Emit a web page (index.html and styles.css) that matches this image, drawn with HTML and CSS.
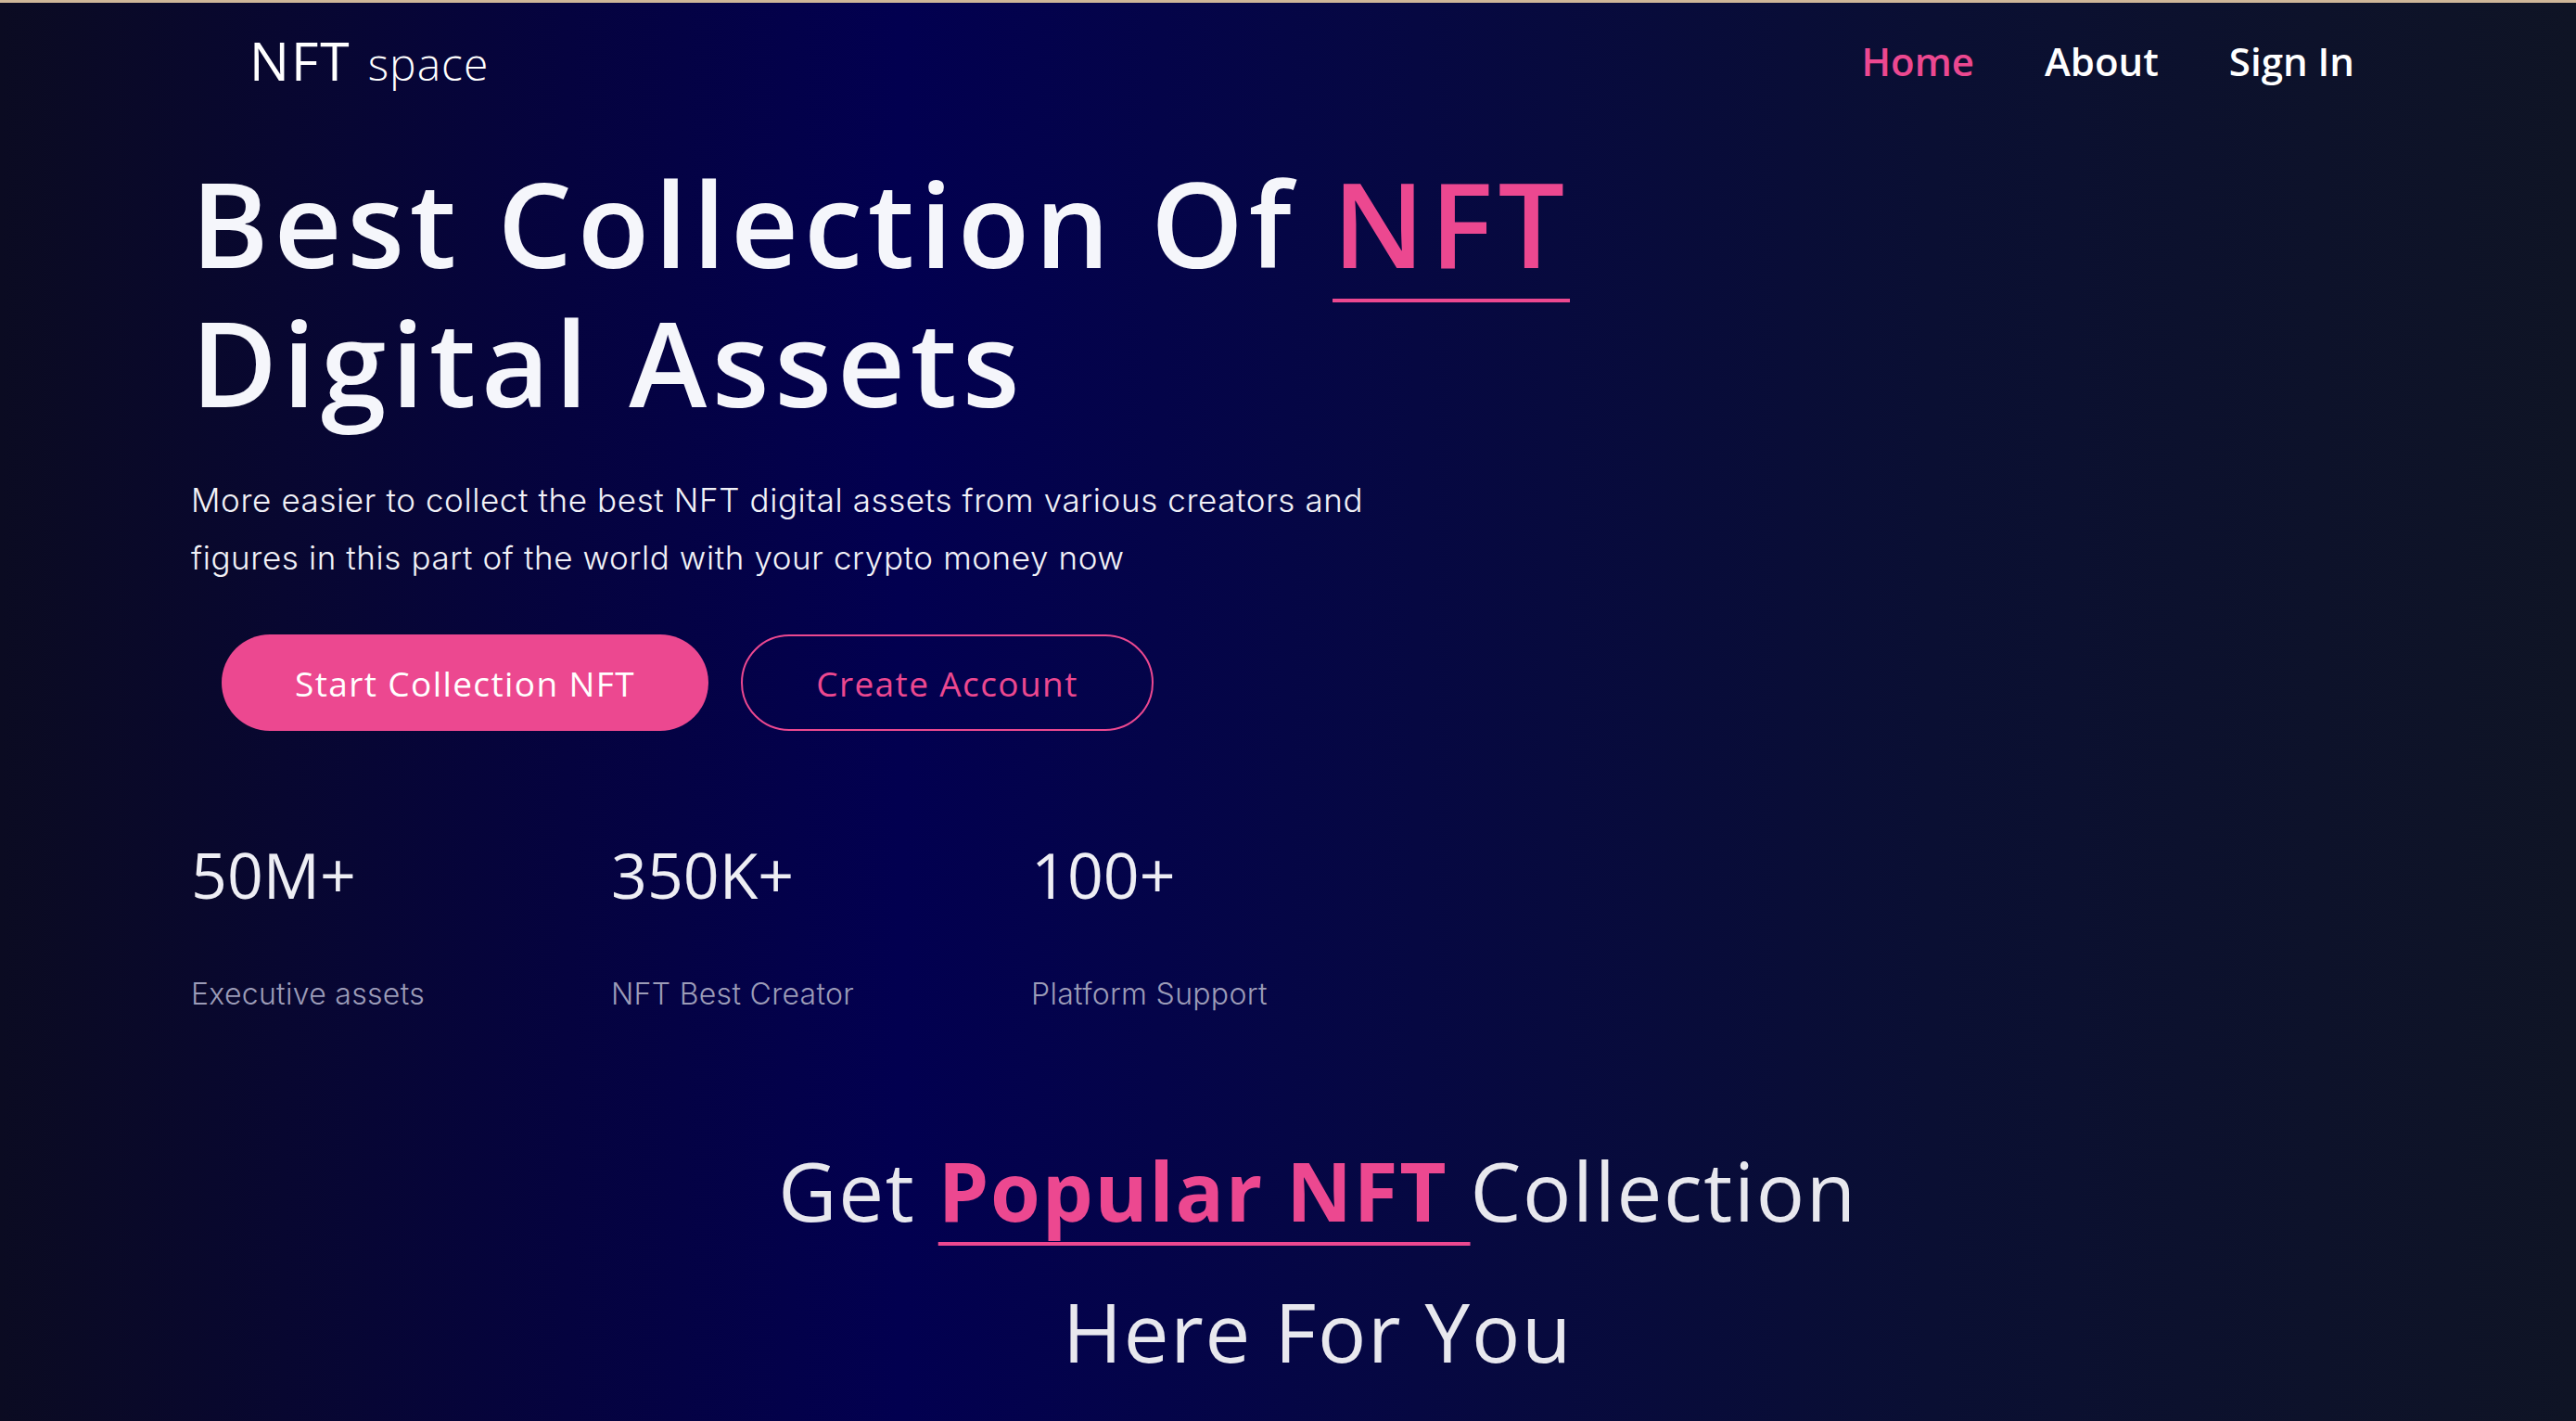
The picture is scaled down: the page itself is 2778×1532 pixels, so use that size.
FILE: index.html
```html
<!DOCTYPE html>
<html lang="en">
<head>
<meta charset="utf-8">
<title>NFT space</title>
<link rel="stylesheet" href="styles.css">
</head>
<body>
<div class="page">
  <header class="header">
    <a class="logo" href="#"><span class="logo-main">NFT</span><span class="logo-sub">space</span></a>
    <nav class="nav">
      <a class="nav-link active" href="#">Home</a>
      <a class="nav-link" href="#">About</a>
      <a class="nav-link" href="#">Sign In</a>
    </nav>
  </header>

  <main class="hero">
    <h1 class="hero-title"><span class="title-line">Best Collection Of <span class="accent-underline">NFT</span></span><span class="title-line">Digital Assets</span></h1>
    <p class="hero-text">More easier to collect the best NFT digital assets from various creators and<br>figures in this part of the world with your crypto money now</p>
    <div class="actions">
      <a class="btn btn-primary" href="#">Start Collection NFT</a>
      <a class="btn btn-outline" href="#">Create Account</a>
    </div>
    <div class="stats">
      <div class="stat">
        <div class="stat-value">50M+</div>
        <div class="stat-label">Executive assets</div>
      </div>
      <div class="stat">
        <div class="stat-value">350K+</div>
        <div class="stat-label">NFT Best Creator</div>
      </div>
      <div class="stat">
        <div class="stat-value">100+</div>
        <div class="stat-label">Platform Support</div>
      </div>
    </div>
  </main>

  <section class="popular">
    <h2 class="popular-title"><span class="popular-line">Get <span class="popular-accent">Popular NFT </span>Collection</span><span class="popular-line">Here For You</span></h2>
  </section>
</div>
</body>
</html>
```

FILE: styles.css
```css
* { box-sizing: border-box; }

html, body {
  margin: 0;
  padding: 0;
}

body {
  min-height: 1532px;
  background: linear-gradient(90deg, #0b0b22 0%, #05033f 22%, #020050 35%, #060842 55%, #0a0f33 75%, #0f1425 100%);
  border-top: 3px solid #cfb799;
  color: #f5f6fb;
  font-family: "Open Sans", "Noto Sans", sans-serif;
  overflow: hidden;
}

a { text-decoration: none; color: inherit; }

.page {
  display: flex;
  flex-direction: column;
}

.header {
  display: flex;
  align-items: center;
  justify-content: space-between;
  height: 124px;
  padding: 0 239px 0 269px;
}

.logo {
  display: flex;
  align-items: baseline;
  gap: 18px;
  color: #ffffff;
}

.logo-main {
  font-family: "Open Sans", sans-serif;
  font-size: 57px;
  font-weight: 400;
  letter-spacing: 2px;
}

.logo-sub {
  font-family: "Open Sans", sans-serif;
  font-size: 48px;
  font-weight: 300;
  letter-spacing: 1px;
}

.nav {
  display: flex;
  gap: 76px;
  font-size: 42px;
  font-weight: 600;
}

.nav-link { color: #ffffff; }
.nav-link.active { color: #ec4890; }

.hero {
  padding: 0 0 0 206px;
}

.hero-title {
  margin: 38px 0 0;
  font-size: 127px;
  line-height: 150px;
  font-weight: 600;
  letter-spacing: 5.7px;
  color: #f5f6fb;
}

.title-line {
  display: block;
  height: 150px;
}

.accent-underline {
  color: #ec4890;
  text-decoration: underline;
  text-decoration-thickness: 4px;
  text-underline-offset: 33px;
}

.hero-text {
  margin: 43px 0 0;
  font-family: "Inter", sans-serif;
  font-weight: 300;
  font-size: 35px;
  line-height: 62px;
  letter-spacing: 0.6px;
  color: #f2f2f8;
}

.actions {
  display: flex;
  gap: 35px;
  margin: 52px 0 0 33px;
}

.btn {
  display: flex;
  align-items: center;
  justify-content: center;
  height: 104px;
  border-radius: 52px;
  font-size: 37px;
  font-weight: 400;
  letter-spacing: 1.4px;
}

.btn-primary {
  width: 525px;
  background: #ec4890;
  color: #ffffff;
}

.btn-outline {
  width: 445px;
  border: 2px solid #ec4890;
  color: #ec4890;
}

.stats {
  display: flex;
  margin-top: 115px;
}

.stat {
  width: 453px;
}

.stat-value {
  font-size: 68px;
  line-height: 80px;
  font-weight: 400;
  color: #eeeef4;
}

.stat-label {
  margin-top: 69px;
  font-family: "Inter", sans-serif;
  font-weight: 300;
  font-size: 32px;
  line-height: 40px;
  letter-spacing: 0.3px;
  color: #9c9cb8;
}

.popular {
  display: flex;
  justify-content: center;
  padding-left: 64px;
  margin-top: 115px;
}

.popular-title {
  margin: 0;
  text-align: center;
  font-size: 87px;
  line-height: 152px;
  font-weight: 500;
  letter-spacing: 1.7px;
  color: #e8e8ee;
}

.popular-line {
  display: block;
  height: 152px;
}

.popular-accent {
  color: #ec4890;
  font-weight: 700;
  text-decoration: underline;
  text-decoration-thickness: 4px;
  text-underline-offset: 22px;
}
```
